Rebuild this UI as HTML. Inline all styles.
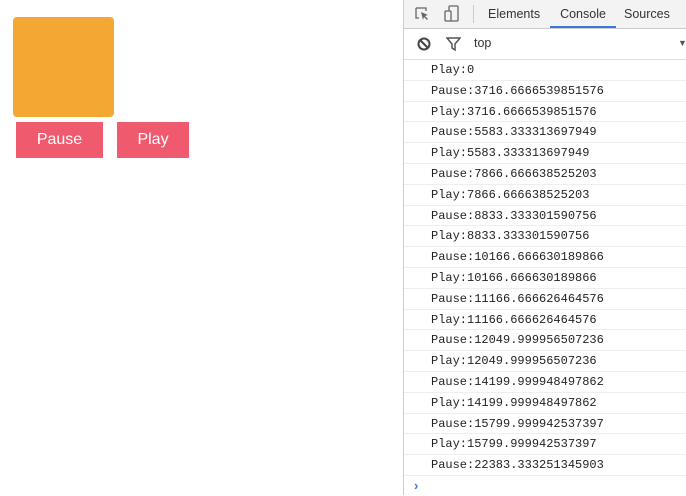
<!DOCTYPE html>
<html><head><style>
body{margin:0;width:686px;height:495px;overflow:hidden;position:relative;background:#fff;font-family:"Liberation Sans",sans-serif}
.box{position:absolute;left:13px;top:17px;width:101px;height:100px;background:#f4a733;border-radius:4px}
.btn{position:absolute;top:122px;height:36px;background:#f05a6e;color:#fff;font-size:16px;line-height:36px;text-align:center}
.dev{position:absolute;left:403px;top:0;width:283px;height:495px;border-left:1px solid #ccc;background:#fff}
.tb{height:28px;background:#f3f3f3;border-bottom:1px solid #ccc;position:relative;font-size:12.5px;color:#333}
.tab{position:absolute;top:0;line-height:28px}
.fb{height:30px;border-bottom:1px solid #ddd;position:relative;font-size:12.5px}
.row{height:19.8px;border-bottom:1px solid #eee;font-family:"Liberation Mono",monospace;font-size:12px;line-height:20px;padding-left:27px;color:#222;white-space:nowrap}
</style></head><body>
<div class="box"></div>
<div class="btn" style="left:16px;width:87px">Pause</div>
<div class="btn" style="left:117px;width:72px">Play</div>
<div class="dev">
<div class="tb">
<svg style="position:absolute;left:10px;top:6px" width="16" height="16" viewBox="0 0 16 16"><path d="M2 2h10v3M2 2v10h3" fill="none" stroke="#666" stroke-width="1.3"/><path d="M7 6l7 3-3 1 3 3-1 1-3-3-1 3z" fill="#666"/></svg>
<svg style="position:absolute;left:40px;top:5px" width="16" height="18" viewBox="0 0 16 18"><rect x="5" y="1" width="9" height="15" rx="1" fill="none" stroke="#666" stroke-width="1.3"/><rect x="1" y="6" width="6" height="10" rx="1" fill="#f3f3f3" stroke="#666" stroke-width="1.3"/></svg>
<div style="position:absolute;left:69px;top:5px;width:1px;height:18px;background:#ccc"></div>
<div class="tab" style="left:84px">Elements</div>
<div class="tab" style="left:146px;width:66px;text-align:center;border-bottom:2px solid #3879d9;height:26px">Console</div>
<div class="tab" style="left:220px">Sources</div>
</div>
<div class="fb">
<svg style="position:absolute;left:13px;top:8px" width="14" height="14" viewBox="0 0 14 14"><circle cx="7" cy="7" r="5.5" fill="none" stroke="#444" stroke-width="2"/><path d="M3 3l8 8" stroke="#444" stroke-width="2"/></svg>
<svg style="position:absolute;left:42px;top:8px" width="15" height="14" viewBox="0 0 15 14"><path d="M1 1h13l-5 6v6l-3-2v-4z" fill="none" stroke="#555" stroke-width="1.5"/></svg>
<div style="position:absolute;left:70px;top:0;line-height:29px;color:#333">top</div>
<div style="position:absolute;left:274px;top:0;line-height:29px;font-size:9px;color:#555">▼</div>
</div>
<div class="row">Play:0</div>
<div class="row">Pause:3716.6666539851576</div>
<div class="row">Play:3716.6666539851576</div>
<div class="row">Pause:5583.333313697949</div>
<div class="row">Play:5583.333313697949</div>
<div class="row">Pause:7866.666638525203</div>
<div class="row">Play:7866.666638525203</div>
<div class="row">Pause:8833.333301590756</div>
<div class="row">Play:8833.333301590756</div>
<div class="row">Pause:10166.666630189866</div>
<div class="row">Play:10166.666630189866</div>
<div class="row">Pause:11166.666626464576</div>
<div class="row">Play:11166.666626464576</div>
<div class="row">Pause:12049.999956507236</div>
<div class="row">Play:12049.999956507236</div>
<div class="row">Pause:14199.999948497862</div>
<div class="row">Play:14199.999948497862</div>
<div class="row">Pause:15799.999942537397</div>
<div class="row">Play:15799.999942537397</div>
<div class="row">Pause:22383.333251345903</div>
<div style="padding-left:10px;color:#3879d9;font-size:13px;line-height:20px;font-weight:bold">›</div>
</div>
</body></html>
